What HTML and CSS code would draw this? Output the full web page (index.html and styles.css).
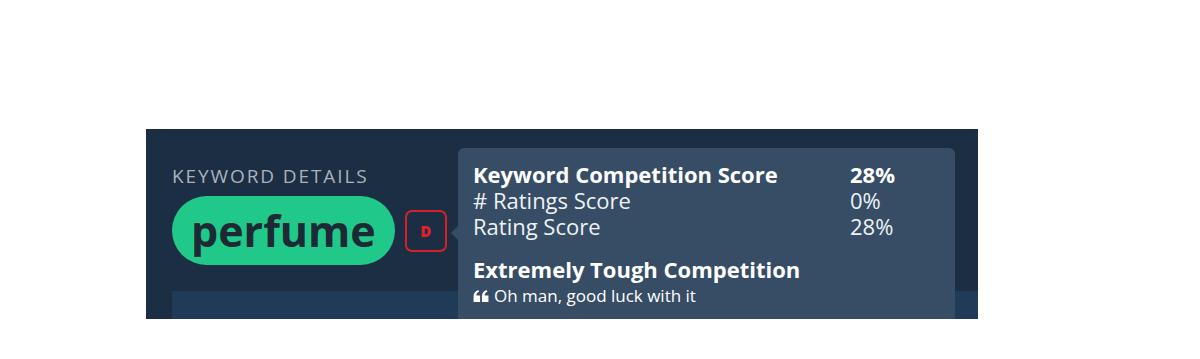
FILE: index.html
```html
<!DOCTYPE html>
<html>
<head>
<meta charset="utf-8">
<link rel="stylesheet" href="styles.css">
</head>
<body>
<div class="page">
  <div class="panel">
    <div class="label">KEYWORD DETAILS</div>
    <div class="kw-row">
      <div class="pill">perfume</div>
      <div class="grade">D</div>
    </div>
    <div class="card"></div>
    <div class="tip">
      <div class="tip-row strong"><span class="k">Keyword Competition Score</span><span class="v">28%</span></div>
      <div class="tip-row"><span class="k"># Ratings Score</span><span class="v">0%</span></div>
      <div class="tip-row"><span class="k">Rating Score</span><span class="v">28%</span></div>
      <div class="verdict">Extremely Tough Competition</div>
      <div class="quote"><svg class="qicon" viewBox="0 0 16 14" width="16" height="13"><path d="M0 7 C0 3 2 1 5 0 L6 1.5 C4 2.5 3 4 3 6 L7 6 L7 13 L0 13 Z M9 7 C9 3 11 1 14 0 L15 1.5 C13 2.5 12 4 12 6 L16 6 L16 13 L9 13 Z" fill="#ffffff"/></svg>Oh man, good luck with it</div>
    </div>
  </div>
</div>
</body>
</html>
```

FILE: styles.css
```css
html, body {
  margin: 0;
  padding: 0;
  background: #ffffff;
}
.page {
  padding: 129px 0 0 146px;
}
.panel {
  position: relative;
  width: 832px;
  height: 190px;
  overflow: hidden;
  background: #1b2e44;
  box-sizing: border-box;
  padding: 36px 0 0 26px;
  font-family: "Open Sans", "Noto Sans", sans-serif;
}
.label {
  color: #a9b3bd;
  font-size: 19px;
  line-height: 22px;
  letter-spacing: 1.9px;
}
.kw-row {
  display: flex;
  align-items: center;
  margin-top: 9px;
  gap: 10px;
}
.pill {
  background: #20c98a;
  color: #1d2a35;
  font-weight: 700;
  font-size: 43px;
  line-height: 69px;
  height: 69px;
  padding: 0 19px;
  border-radius: 35px;
}
.grade {
  width: 38px;
  height: 38px;
  border: 2px solid #d8202c;
  border-radius: 7px;
  color: #e0202c;
  font-weight: 800;
  font-size: 15px;
  display: flex;
  align-items: center;
  justify-content: center;
}
.card {
  margin-top: 26px;
  height: 60px;
  background: #1f3b57;
}
.tip {
  position: absolute;
  left: 312px;
  top: 19px;
  width: 497px;
  height: 200px;
  background: #364d65;
  border-radius: 6px;
  box-sizing: border-box;
  padding: 13px 15px;
  color: #ffffff;
}
.tip::before {
  content: "";
  position: absolute;
  left: -7px;
  top: 78px;
  border-style: solid;
  border-width: 7px 7px 7px 0;
  border-color: transparent #364d65 transparent transparent;
}
.tip-row {
  display: flex;
  font-size: 22px;
  line-height: 26px;
  color: #eef2f5;
}
.tip-row .k {
  width: 377px;
}
.strong {
  font-weight: 700;
  color: #ffffff;
}
.verdict {
  margin-top: 17px;
  font-size: 22px;
  line-height: 26px;
  font-weight: 700;
}
.quote {
  font-size: 17px;
  line-height: 22px;
  margin-top: 3px;
  display: flex;
  align-items: center;
  gap: 5px;
}
.qicon {
  flex: none;
}
```
